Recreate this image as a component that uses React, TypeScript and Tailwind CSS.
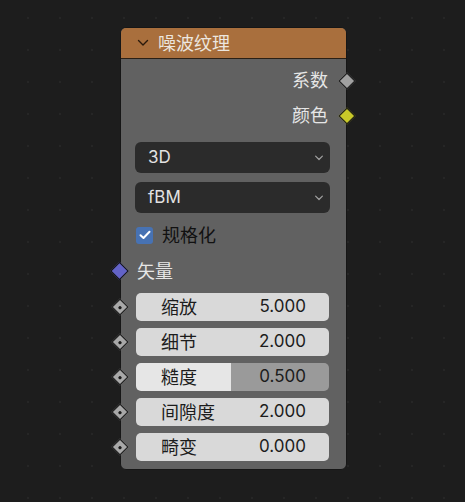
import React from "react";

const font = { fontFamily: 'Inter, "Noto Sans CJK SC", "Noto Sans", sans-serif' };

function Diamond({ color, size = 12, dot = false }: { color: string; size?: number; dot?: boolean }) {
  return (
    <div
      className="flex items-center justify-center rotate-45 border-[1.5px] border-[#141414]"
      style={{ width: size, height: size, background: color }}
    >
      {dot && <div className="w-[3px] h-[3px] bg-[#1a1a1a] rounded-[1px]" />}
    </div>
  );
}

function Chevron({ className = "", w = 1.6 }: { className?: string; w?: number }) {
  return (
    <svg width="12" height="8" viewBox="0 0 12 8" className={className}>
      <path d="M1.5 1.5 L6 6 L10.5 1.5" fill="none" stroke="currentColor" strokeWidth={w} strokeLinecap="round" strokeLinejoin="round" />
    </svg>
  );
}

function Dropdown({ label }: { label: string }) {
  return (
    <div className="h-[31px] rounded-[6px] bg-[#2b2b2b] flex items-center justify-between pl-[13px] pr-[5px] text-[#e2e2e2] text-[17px]">
      <span>{label}</span>
      <Chevron className="text-[#a0a0a0] scale-75" />
    </div>
  );
}

function NumField({ label, value, factor }: { label: string; value: string; factor?: number }) {
  return (
    <div className="relative flex items-center h-[28px]">
      <div className="absolute left-[-22px] top-1/2 -translate-y-1/2">
        <Diamond color="#a8a8a8" size={12} dot />
      </div>
      <div
        className="relative flex-1 h-full rounded-[5px] overflow-hidden flex items-center justify-between pl-[25px] pr-[23px] text-[#1c1c1c] text-[17px]"
        style={{
          background:
            factor !== undefined
              ? `linear-gradient(to right, #e6e6e6 0%, #e6e6e6 ${factor * 100}%, #9a9a9a ${factor * 100}%, #9a9a9a 100%)`
              : "#d9d9d9",
        }}
      >
        <span className="text-[18px]">{label}</span>
        <span>{value}</span>
      </div>
    </div>
  );
}

export default function App() {
  return (
    <div
      className="relative w-[465px] h-[502px] overflow-hidden bg-[#1d1d1d] bg-[radial-gradient(circle,#262626_1px,transparent_1.6px)] bg-[length:32px_32px] bg-[position:12px_2px]"
      style={font}
    >
      <div className="absolute left-[120px] top-[27px] w-[227px] h-[443px] rounded-[6px] border border-[#161616] bg-[#616161] flex flex-col">
        <div className="h-[31px] rounded-t-[5px] bg-[#a96f3d] border-b border-[#2a2016] flex items-center pl-[16px] gap-[9px] text-[#ece6df] text-[18px]">
          <Chevron className="text-[#2a1a0c]" w={1.4} />
          <span>噪波纹理</span>
        </div>
        <div className="flex flex-col pt-[4px] pl-[14px] pr-[16px] text-[18px]">
          <div className="relative h-[35px] flex items-center justify-end pr-[2px] text-[#e6e6e6]">
            <span>系数</span>
            <div className="absolute right-[-23px] top-1/2 -translate-y-1/2">
              <Diamond color="#a1a1a1" size={12} />
            </div>
          </div>
          <div className="relative h-[35px] flex items-center justify-end pr-[2px] text-[#e6e6e6]">
            <span>颜色</span>
            <div className="absolute right-[-23px] top-1/2 -translate-y-1/2">
              <Diamond color="#c8c829" size={12} />
            </div>
          </div>
          <div className="mt-[9px] flex flex-col gap-[9px]">
            <Dropdown label="3D" />
            <Dropdown label="fBM" />
          </div>
          <div className="mt-[10px] h-[24px] flex items-center gap-[9px]">
            <div className="w-[17px] h-[17px] ml-[1px] rounded-[3px] bg-[#4772b3] flex items-center justify-center">
              <svg width="12" height="10" viewBox="0 0 12 10">
                <path d="M1.5 5.2 L4.5 8 L10.5 1.8" fill="none" stroke="#ffffff" strokeWidth="2" strokeLinecap="round" strokeLinejoin="round" />
              </svg>
            </div>
            <span className="text-[#111111]">规格化</span>
          </div>
          <div className="relative mt-[12px] h-[24px] flex items-center pl-[2px] text-[#e6e6e6]">
            <div className="absolute left-[-22px] top-1/2 -translate-y-1/2">
              <Diamond color="#6363c8" size={13} />
            </div>
            <span>矢量</span>
          </div>
          <div className="mt-[10px] flex flex-col gap-[7px] pl-[1px] pr-[1px]">
            <NumField label="缩放" value="5.000" />
            <NumField label="细节" value="2.000" />
            <NumField label="糙度" value="0.500" factor={0.49} />
            <NumField label="间隙度" value="2.000" />
            <NumField label="畸变" value="0.000" />
          </div>
        </div>
      </div>
    </div>
  );
}
